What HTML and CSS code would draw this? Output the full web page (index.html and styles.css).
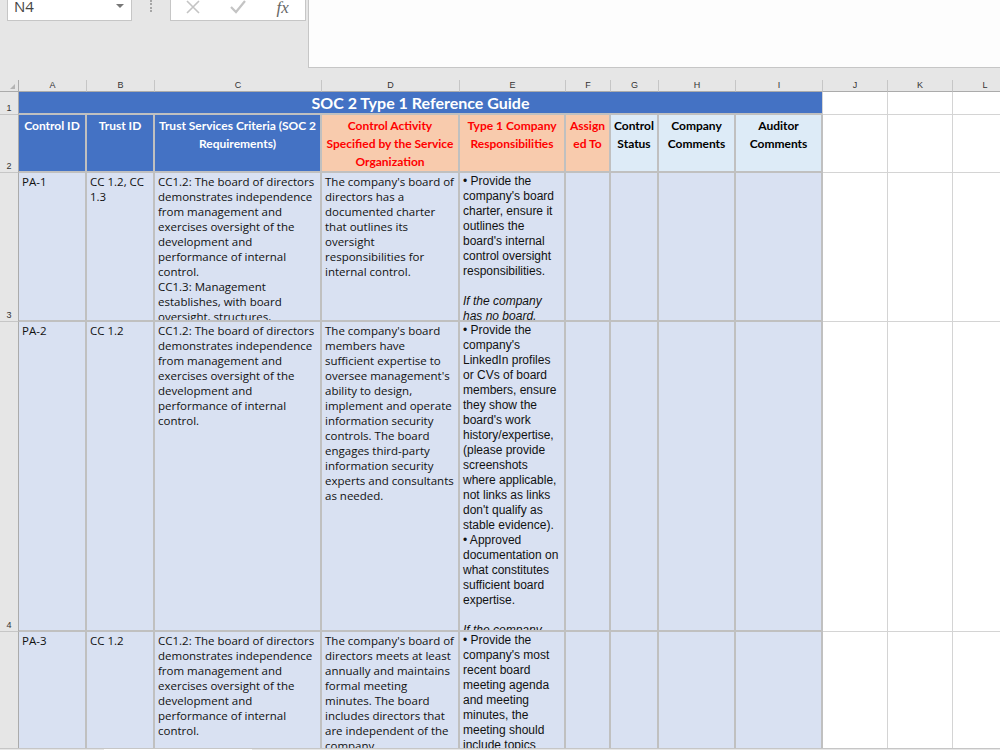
FILE: index.html
```html
<!DOCTYPE html>
<html lang="en">
<head>
    <meta charset="UTF-8">
    <title>SOC 2 Type 1 Reference Guide</title>
    <link rel="stylesheet" href="styles.css">
</head>
<body>
    <div class="ribbon">
        <div class="name-box">
            <span class="name-text">N4</span>
            <span class="drop-arrow"></span>
        </div>
        <div class="grip"></div>
        <div class="fx-box">
            <span class="fx-slot">
                <svg width="14" height="14" viewBox="0 0 14 14"><path d="M1 1 L13 13 M13 1 L1 13" stroke="#c4c4c4" stroke-width="1.6" fill="none"/></svg>
            </span>
            <span class="fx-slot">
                <svg width="16" height="14" viewBox="0 0 16 14"><path d="M1 7 L6 12 L15 1" stroke="#c4c4c4" stroke-width="2.2" fill="none"/></svg>
            </span>
            <span class="fx-slot fx-label">fx</span>
        </div>
        <div class="formula-bar"></div>
    </div>

    <div class="sheet">
        <!-- column letters -->
        <div class="corner"><span class="corner-mark"></span></div>
        <div class="col-head">A</div>
        <div class="col-head">B</div>
        <div class="col-head">C</div>
        <div class="col-head">D</div>
        <div class="col-head">E</div>
        <div class="col-head">F</div>
        <div class="col-head">G</div>
        <div class="col-head">H</div>
        <div class="col-head">I</div>
        <div class="col-head">J</div>
        <div class="col-head">K</div>
        <div class="col-head">L</div>

        <!-- row 1 -->
        <div class="row-head">1</div>
        <div class="title-cell">SOC 2 Type 1 Reference Guide</div>
        <div class="blank"></div>
        <div class="blank"></div>
        <div class="blank"></div>

        <!-- row 2 -->
        <div class="row-head">2</div>
        <div class="hd hd-blue">Control ID</div>
        <div class="hd hd-blue">Trust ID</div>
        <div class="hd hd-blue">Trust Services Criteria (SOC 2<br>Requirements)</div>
        <div class="hd hd-peach">Control Activity<br>Specified by the Service<br>Organization</div>
        <div class="hd hd-peach">Type 1 Company<br>Responsibilities</div>
        <div class="hd hd-peach">Assign<br>ed To</div>
        <div class="hd hd-light">Control<br>Status</div>
        <div class="hd hd-light">Company<br>Comments</div>
        <div class="hd hd-light">Auditor<br>Comments</div>
        <div class="blank"></div>
        <div class="blank"></div>
        <div class="blank"></div>

        <!-- row 3 -->
        <div class="row-head">3</div>
        <div class="cell">PA-1</div>
        <div class="cell">CC 1.2, CC<br>1.3</div>
        <div class="cell">CC1.2: The board of directors<br>demonstrates independence<br>from management and<br>exercises oversight of the<br>development and<br>performance of internal<br>control.<br>CC1.3: Management<br>establishes, with board<br>oversight, structures,<br>reporting lines, and<br>appropriate authorities</div>
        <div class="cell">The company's board of<br>directors has a<br>documented charter<br>that outlines its<br>oversight<br>responsibilities for<br>internal control.</div>
        <div class="cell cell-arial">&bull; Provide the<br>company's board<br>charter, ensure it<br>outlines the<br>board's internal<br>control oversight<br>responsibilities.<br><br><i>If the company<br>has no board,</i></div>
        <div class="cell"></div>
        <div class="cell"></div>
        <div class="cell"></div>
        <div class="cell"></div>
        <div class="blank"></div>
        <div class="blank"></div>
        <div class="blank"></div>

        <!-- row 4 -->
        <div class="row-head">4</div>
        <div class="cell">PA-2</div>
        <div class="cell">CC 1.2</div>
        <div class="cell">CC1.2: The board of directors<br>demonstrates independence<br>from management and<br>exercises oversight of the<br>development and<br>performance of internal<br>control.</div>
        <div class="cell">The company's board<br>members have<br>sufficient expertise to<br>oversee management's<br>ability to design,<br>implement and operate<br>information security<br>controls. The board<br>engages third-party<br>information security<br>experts and consultants<br>as needed.</div>
        <div class="cell cell-arial">&bull; Provide the<br>company's<br>LinkedIn profiles<br>or CVs of board<br>members, ensure<br>they show the<br>board's work<br>history/expertise,<br>(please provide<br>screenshots<br>where applicable,<br>not links as links<br>don't qualify as<br>stable evidence).<br>&bull; Approved<br>documentation on<br>what constitutes<br>sufficient board<br>expertise.<br><br><i>If the company<br>has no board,</i></div>
        <div class="cell"></div>
        <div class="cell"></div>
        <div class="cell"></div>
        <div class="cell"></div>
        <div class="blank"></div>
        <div class="blank"></div>
        <div class="blank"></div>

        <!-- row 5 -->
        <div class="row-head">5</div>
        <div class="cell">PA-3</div>
        <div class="cell">CC 1.2</div>
        <div class="cell">CC1.2: The board of directors<br>demonstrates independence<br>from management and<br>exercises oversight of the<br>development and<br>performance of internal<br>control.</div>
        <div class="cell">The company's board of<br>directors meets at least<br>annually and maintains<br>formal meeting<br>minutes. The board<br>includes directors that<br>are independent of the<br>company.</div>
        <div class="cell cell-arial">&bull; Provide the<br>company's most<br>recent board<br>meeting agenda<br>and meeting<br>minutes, the<br>meeting should<br>include topics<br>such as</div>
        <div class="cell"></div>
        <div class="cell"></div>
        <div class="cell"></div>
        <div class="cell"></div>
        <div class="blank"></div>
        <div class="blank"></div>
        <div class="blank"></div>
    </div>

    <div class="tab-strip">
        <div class="tab-active"></div>
    </div>
</body>
</html>
```

FILE: styles.css
```css
body {
    margin: 0;
    width: 1000px;
    height: 750px;
    overflow: hidden;
    background-color: #e6e6e6;
    font-family: "Open Sans", sans-serif;
    color: #000;
}

/* formula bar area */
.ribbon {
    height: 80px;
    display: flex;
    align-items: flex-start;
}
.name-box {
    margin-left: 7px;
    width: 125px;
    height: 21px;
    box-sizing: border-box;
    background-color: #fff;
    border: 1px solid #c6c6c6;
    border-top: none;
    display: flex;
    justify-content: space-between;
    align-items: flex-start;
    padding: 0 7px 0 6px;
}
.name-text {
    font-size: 15px;
    line-height: 13px;
    color: #444;
}
.drop-arrow {
    margin-top: 4px;
    width: 0;
    height: 0;
    border-left: 4px solid transparent;
    border-right: 4px solid transparent;
    border-top: 4px solid #777;
}
.grip {
    margin-left: 18px;
    height: 12px;
    border-left: 2px dotted #a6a6a6;
}
.fx-box {
    margin-left: 18px;
    width: 136px;
    height: 21px;
    box-sizing: border-box;
    background-color: #fff;
    border: 1px solid #c6c6c6;
    border-top: none;
    display: flex;
}
.fx-slot {
    width: 45px;
    height: 14px;
    display: flex;
    justify-content: center;
    align-items: flex-start;
}
.fx-label {
    font-family: "Liberation Serif", serif;
    font-style: italic;
    font-size: 17px;
    line-height: 16px;
    color: #666;
}
.formula-bar {
    margin-left: 2px;
    flex: 1;
    height: 68px;
    box-sizing: border-box;
    background-color: #fdfdfd;
    border-left: 1px solid #c6c6c6;
    border-bottom: 1px solid #c6c6c6;
}

/* worksheet grid */
.sheet {
    display: grid;
    grid-template-columns: 19px 68px 68px 167px 138px 106px 45px 48px 77px 87px 65px 65px 65px;
    grid-template-rows: 12px 23px 58px 149px 310px 200px;
    width: 1018px;
    height: 668px;
    overflow: hidden;
}
.sheet > div {
    box-sizing: border-box;
    overflow: hidden;
}
.corner {
    position: relative;
    border-right: 1px solid #ababab;
    border-bottom: 1px solid #ababab;
}
.corner-mark {
    position: absolute;
    right: 3px;
    bottom: 2px;
    width: 0;
    height: 0;
    border-left: 5px solid transparent;
    border-bottom: 5px solid #b4b4b4;
}
.col-head {
    border-right: 1px solid #c6c6c6;
    border-bottom: 1px solid #ababab;
    font-family: "Liberation Sans", sans-serif;
    font-size: 9px;
    line-height: 11px;
    text-align: center;
    color: #333;
}
.row-head {
    border-right: 1px solid #ababab;
    border-bottom: 1px solid #c6c6c6;
    display: flex;
    align-items: flex-end;
    justify-content: center;
    font-family: "Liberation Sans", sans-serif;
    font-size: 9px;
    line-height: 11px;
    color: #333;
}
.title-cell {
    grid-column: span 9;
    background-color: #4472c4;
    border-bottom: 2px solid #c0c0c0;
    border-right: 1px solid #d4d4d4;
    color: #fff;
    font-family: Lato, sans-serif;
    font-weight: bold;
    font-size: 16px;
    line-height: 22px;
    text-align: center;
}
.hd {
    border-right: 2px solid #c0c0c0;
    border-bottom: 2px solid #c0c0c0;
    padding-top: 2px;
    font-family: Lato, sans-serif;
    font-weight: bold;
    font-size: 12px;
    line-height: 18px;
    text-align: center;
    white-space: nowrap;
}
.hd-blue {
    background-color: #4472c4;
    color: #fff;
}
.hd-peach {
    background-color: #f8cbad;
    color: #ff0000;
}
.hd-light {
    background-color: #ddebf7;
    color: #000;
}
.cell {
    background-color: #d9e1f2;
    border-right: 2px solid #c0c0c0;
    border-bottom: 2px solid #c0c0c0;
    padding: 1px 3px 0;
    font-size: 11.5px;
    line-height: 15px;
    white-space: nowrap;
    color: #111;
}
.cell-arial {
    font-family: "Liberation Sans", sans-serif;
    font-size: 12px;
}
.blank {
    background-color: #fff;
    border-right: 1px solid #d4d4d4;
    border-bottom: 1px solid #d4d4d4;
}

/* sheet tabs, only the top edge shows */
.tab-strip {
    height: 2px;
    border-top: 1px solid #c6c6c6;
    box-sizing: border-box;
}
.tab-active {
    margin-left: 104px;
    width: 148px;
    height: 1px;
    background-color: #fff;
}
```
